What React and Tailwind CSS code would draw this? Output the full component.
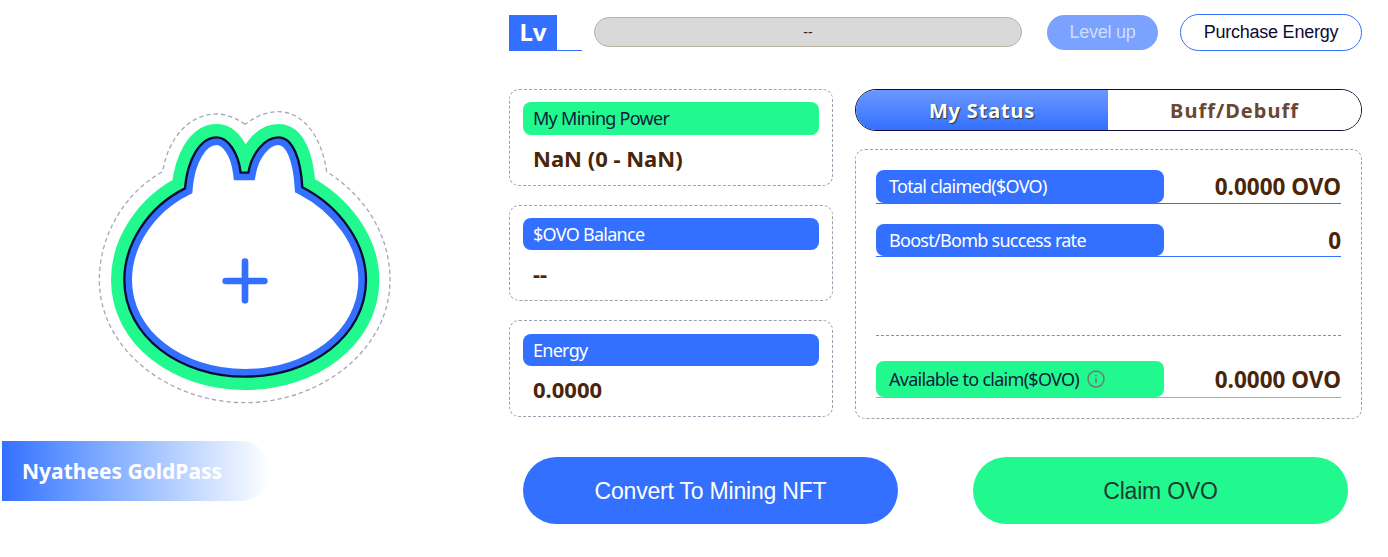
const FONT = "font-['Noto_Sans',sans-serif]";
const ARIAL = "font-['Liberation_Sans',Arial,sans-serif]";

const BODY_PATH =
  'M452 218 C445 160 415 112 380 112 C330 112 292 180 285 265 C175 320 103 430 103 540 C103 710 270 830 465 830 C660 830 828 710 828 540 C828 430 750 320 637 262 C632 180 610 112 565 112 C525 112 485 160 475 218 Z';
const OUTER_PATH =
  'M465 73 C440 55 410 42 380 42 C300 42 235 110 218 215 C100 280 28 410 28 540 C28 750 240 908 465 908 C690 908 900 750 900 540 C900 410 830 290 710 215 C695 110 640 35 565 35 C530 35 495 50 465 73 Z';

const Mascot = () => (
  <svg width="310" height="310" viewBox="0 0 930 930" fill="none">
    <defs>
      <clipPath id="inner">
        <path d={BODY_PATH} />
      </clipPath>
    </defs>
    <path d={OUTER_PATH} stroke="#aaa7b4" strokeWidth="4" strokeDasharray="13 9" />
    <path d={BODY_PATH} fill="#fff" stroke="#21f98e" strokeWidth="80" strokeLinejoin="round" />
    <path d={BODY_PATH} fill="#fff" />
    <path d={BODY_PATH} stroke="#3370ff" strokeWidth="46" clipPath="url(#inner)" />
    <path d={BODY_PATH} stroke="#0c0c36" strokeWidth="7" />
    <path d="M465 485 V601 M407 543 H523" stroke="#3370ff" strokeWidth="20" strokeLinecap="round" />
  </svg>
);

const StatCard = ({ label, value, green, className, labelClass }) => (
  <div className={`rounded-[10px] border border-dashed border-[#a19cb0] px-[13px] ${className}`}>
    <div
      className={`flex items-center rounded-lg pl-[10px] text-[18px] tracking-[-0.72px] ${labelClass} ${
        green ? 'bg-[#21f98e] text-[#10203f]' : 'bg-[#3370ff] text-white'
      }`}
    >
      {label}
    </div>
    <div className="mt-[7px] pl-[10px] text-[22px] leading-[32px] font-bold text-[#4a2509]">{value}</div>
  </div>
);

const StatusRow = ({ label, value, green, icon, className, valueClass }) => (
  <div className={`flex items-center justify-between border-b ${green ? 'border-[#21f98e]' : 'border-[#3370ff]'} ${className}`}>
    <div
      className={`flex h-full w-[288px] items-center gap-2 rounded-lg pl-[13px] text-[18px] tracking-[-0.72px] ${
        green ? 'bg-[#21f98e] text-[#10203f]' : 'bg-[#3370ff] text-white'
      }`}
    >
      {label}
      {icon && (
        <svg width="18" height="18" viewBox="0 0 18 18" fill="none" stroke="#6f7a75" strokeWidth="1.5">
          <circle cx="9" cy="9" r="8" />
          <path d="M9 8 V13 M9 5 V6.2" />
        </svg>
      )}
    </div>
    <span className={`text-[22.5px] font-bold text-[#4a2509] ${valueClass}`}>{value}</span>
  </div>
);

const App = () => {
  return (
    <div className={`flex h-[557px] w-[1388px] overflow-hidden bg-white ${FONT}`}>
      {/* 왼쪽 */}
      <div className="w-[509px] shrink-0">
        <div className="flex justify-center pt-[100px] pr-[19px]">
          <Mascot />
        </div>
        <div className="mt-[31px] ml-[2px] flex h-[60px] w-[268px] items-center rounded-r-[30px] bg-gradient-to-r from-[#3370ff] to-white pt-px pl-[20px] text-[21px] font-bold text-white">
          Nyathees GoldPass
        </div>
      </div>

      {/* 오른쪽 */}
      <div className="w-[853px] shrink-0 pt-[14px]">
        <div className="flex h-[37px] items-center">
          <div className="flex h-[36px] w-[73px] border-b border-[#3370ff]">
            <div className="flex w-[48px] items-center justify-center bg-[#3370ff] text-[24px] font-bold text-white">
              Lv
            </div>
          </div>
          <div className={`mb-[1px] ml-[12px] flex h-[30px] w-[428px] items-center justify-center rounded-[15px] border border-[#b9b1a4] bg-[#d9d9d9] text-[14px] text-[#222] ${ARIAL}`}>
            --
          </div>
          <button type="button" className={`ml-[25px] h-[35px] w-[111px] rounded-full bg-[#7ba2ff] text-[18px] tracking-[-0.25px] text-[#d0defe] ${ARIAL}`}>
            Level up
          </button>
          <button type="button" className={`ml-[22px] h-[37px] w-[182px] rounded-full border border-[#3370ff] bg-white text-[18px] tracking-[-0.25px] text-[#0c0c36] ${ARIAL}`}>
            Purchase Energy
          </button>
        </div>

        <div className="mt-[38px] flex gap-[22px]">
          <div className="flex w-[324px] flex-col gap-[19px]">
            <StatCard label="My Mining Power" value="NaN (0 - NaN)" green className="h-[97px] pt-[12px]" labelClass="h-[33px]" />
            <StatCard label="$OVO Balance" value="--" className="h-[96px] pt-[12px]" labelClass="h-[32px]" />
            <StatCard label="Energy" value="0.0000" className="h-[97px] pt-[13px]" labelClass="h-[32px]" />
          </div>
          <div className="w-[507px]">
            <div className="flex h-[42px] overflow-hidden rounded-[21px] border border-[#0c0c36] text-[20px] font-bold">
              <div className="flex w-[252px] items-center justify-center bg-gradient-to-b from-[#6a97ff] to-[#3370ff] pt-px tracking-[0.8px] text-white [text-shadow:1px_1px_1px_#333]">
                My Status
              </div>
              <div className="flex flex-1 items-center justify-center bg-white pt-px tracking-[1px] text-[#6b4732]">Buff/Debuff</div>
            </div>
            <div className="mt-[18px] h-[270px] rounded-[10px] border border-dashed border-[#a19cb0] px-[20px] pt-[20px]">
              <StatusRow label="Total claimed($OVO)" value="0.0000 OVO" className="h-[34px]" />
              <StatusRow label="Boost/Bomb success rate" value="0" className="mt-[20px] h-[33px]" valueClass="pt-[2px]" />
              <div className="mt-[78px] border-t border-dashed border-[#8f8b9c]" />
              <StatusRow label="Available to claim($OVO)" value="0.0000 OVO" green icon className="mt-[25px] h-[37px]" valueClass="pt-[2px]" />
            </div>
          </div>
        </div>

        <div className={`mt-[38px] flex gap-[75px] pl-[14px] text-[23px] tracking-[-0.2px] ${ARIAL}`}>
          <button type="button" className="h-[67px] w-[375px] rounded-full bg-[#3370ff] pt-px text-white">
            Convert To Mining NFT
          </button>
          <button type="button" className="h-[67px] w-[375px] rounded-full bg-[#21f98e] pt-px text-[#1f3a33]">
            Claim OVO
          </button>
        </div>
      </div>
    </div>
  );
};

export default App;
